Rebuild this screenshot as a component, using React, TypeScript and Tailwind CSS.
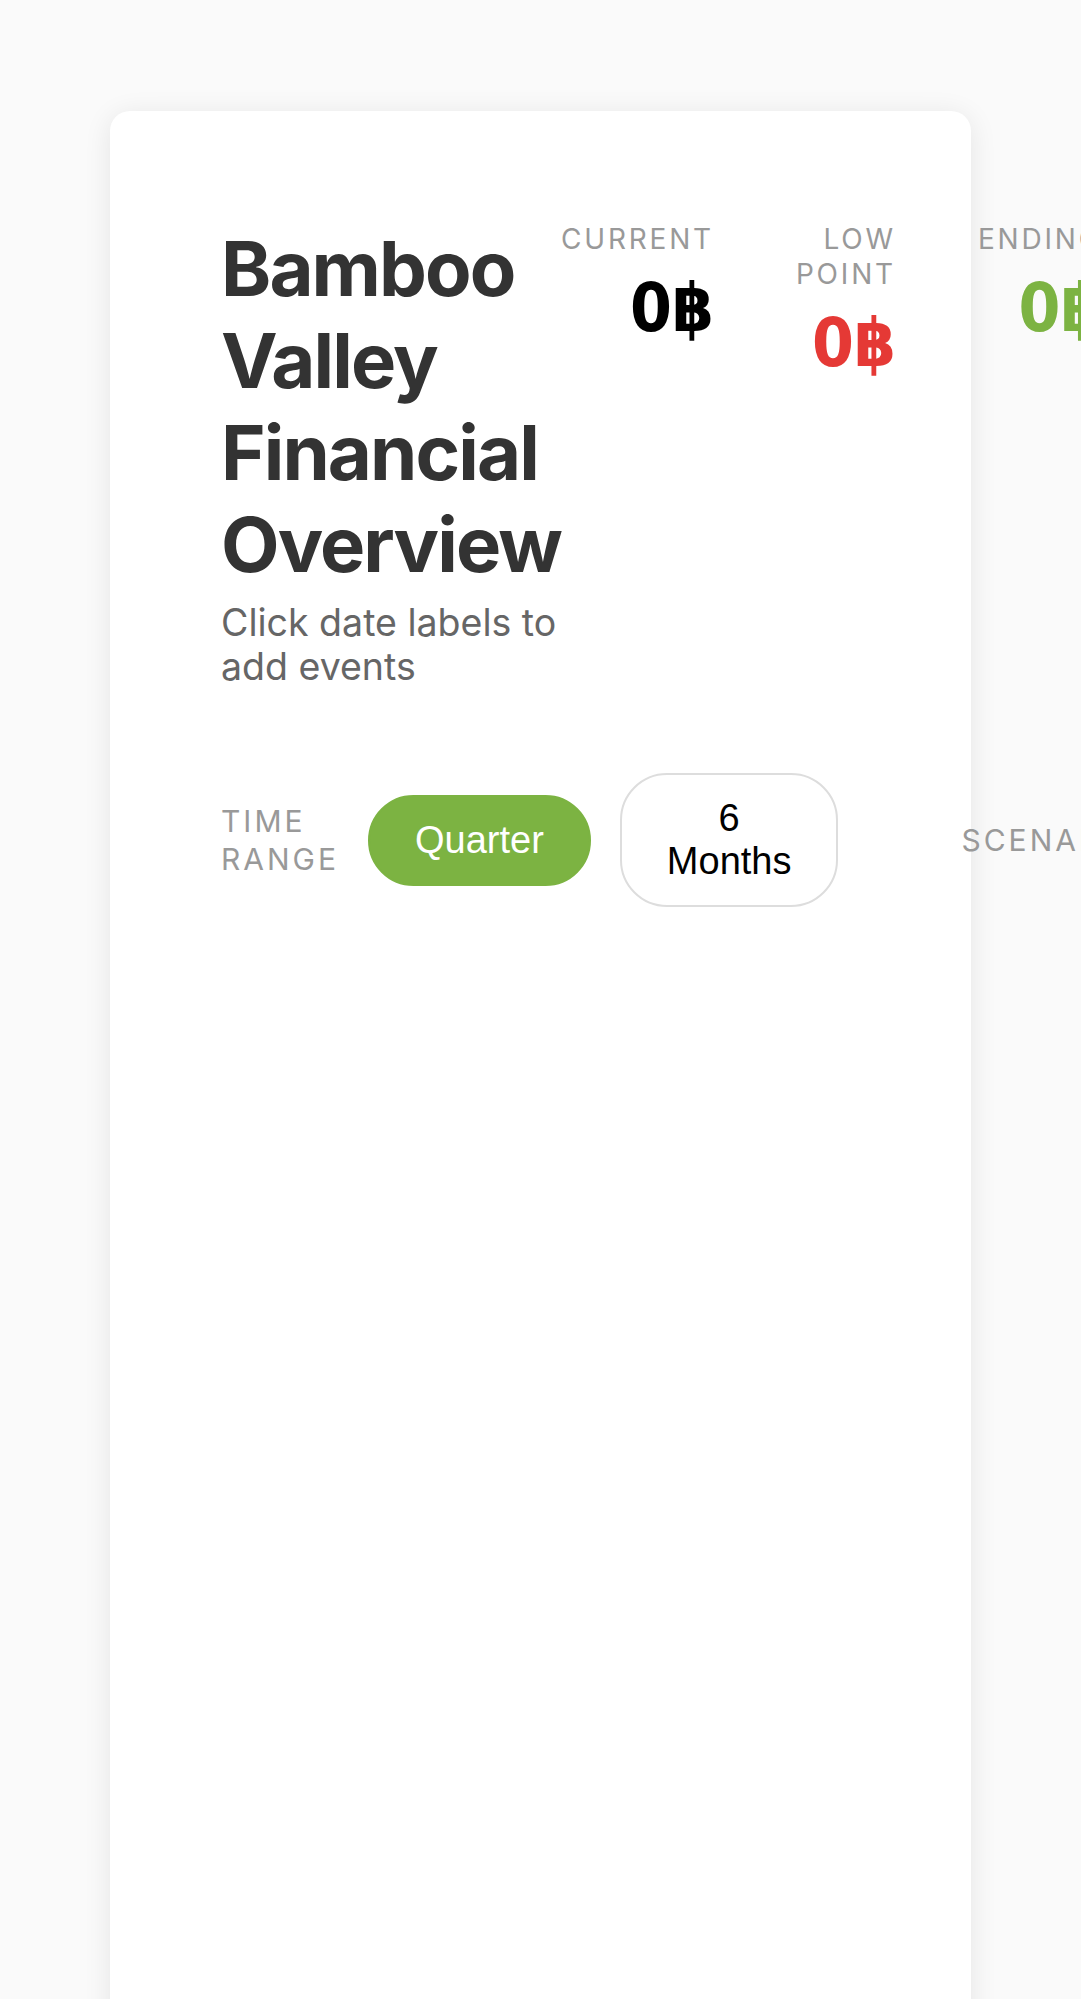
import { type FC } from 'react'

type Stat = {
  label: string
  value: string
  color: string
}

const stats: Stat[] = [
  { label: 'Current', value: '0฿', color: 'text-black' },
  { label: 'Low Point', value: '0฿', color: 'text-[#e53935]' },
  { label: 'Ending', value: '0฿', color: 'text-[#7cb342]' },
]

const StatBlock: FC<{ stat: Stat }> = ({ stat }) => (
  <div className="w-min shrink-0 text-right">
    <div className="font-['Inter',sans-serif] text-[28px] leading-[35px] tracking-[0.1em] uppercase text-[#999]">
      {stat.label}
    </div>
    <div
      className={`mt-[12px] font-['DejaVu_Sans_Condensed','DejaVu_Sans',sans-serif] font-stretch-condensed text-[67px] leading-[78px] font-bold whitespace-nowrap ${stat.color}`}
    >
      {stat.value}
    </div>
  </div>
)

const ControlLabel: FC<{ children: string }> = ({ children }) => (
  <span className="w-min shrink-0 font-['Inter',sans-serif] text-[30px] leading-[38px] tracking-[0.1em] uppercase text-[#999]">
    {children}
  </span>
)

export default function App() {
  return (
    <div className="min-h-screen bg-[#fafafa] pt-[111px] px-[110px] overflow-hidden">
      <div className="w-[861px] min-h-[2100px] rounded-[20px] bg-white shadow-[0_4px_28px_rgba(0,0,0,0.09)] p-[111px]">
        <header className="flex items-start">
          <div className="w-[340px] shrink-0">
            <h1 className="font-['Inter',sans-serif] text-[76px] leading-[92px] font-bold tracking-[-0.025em] text-[#333]">
              Bamboo Valley Financial Overview
            </h1>
            <p className="mt-[11px] font-['Inter',sans-serif] text-[37.5px] leading-[44px] text-[#666]">
              Click date labels to add events
            </p>
          </div>
          <div className="flex shrink-0 gap-[82px]">
            {stats.map((s) => (
              <StatBlock key={s.label} stat={s} />
            ))}
          </div>
        </header>

        <div className="mt-[84px] flex items-center">
          <div className="flex shrink-0 items-center gap-[29px]">
            <ControlLabel>Time Range</ControlLabel>
            <button className="shrink-0 rounded-[47px] border-2 border-[#7cb342] bg-[#7cb342] px-[45px] py-[22px] font-['Liberation_Sans',Arial,sans-serif] text-[38px] leading-[43px] text-white">
              Quarter
            </button>
            <button className="w-min shrink-0 rounded-[47px] border-2 border-[#ddd] bg-white px-[45px] py-[22px] text-center font-['Liberation_Sans',Arial,sans-serif] text-[38px] leading-[43px] text-black">
              6 Months
            </button>
          </div>
          <div className="ml-[123px] flex shrink-0 items-center gap-[30px]">
            <ControlLabel>Scenario</ControlLabel>
          </div>
        </div>

        <div className="h-[1100px]" />
      </div>
    </div>
  )
}
